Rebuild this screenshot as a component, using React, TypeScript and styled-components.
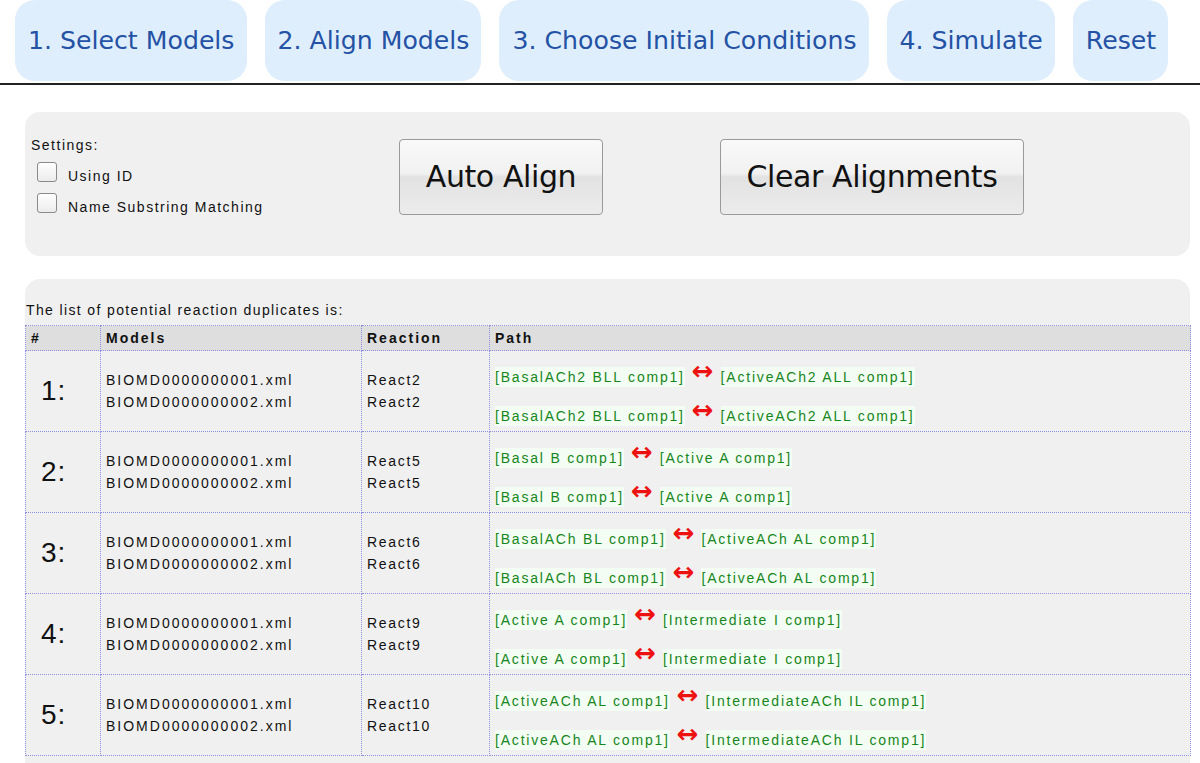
import React from "react";
import styled, { createGlobalStyle } from "styled-components";

const GlobalStyle = createGlobalStyle`
  html, body {
    margin: 0;
    padding: 0;
    background: #ffffff;
    font-family: "Liberation Sans", Arial, sans-serif;
    color: #111;
  }
`;

type PathPair = { from: string; to: string };
type Duplicate = { id: number; reaction: string; path: PathPair };

const duplicates: Duplicate[] = [
  { id: 1, reaction: "React2", path: { from: "[BasalACh2 BLL comp1]", to: "[ActiveACh2 ALL comp1]" } },
  { id: 2, reaction: "React5", path: { from: "[Basal B comp1]", to: "[Active A comp1]" } },
  { id: 3, reaction: "React6", path: { from: "[BasalACh BL comp1]", to: "[ActiveACh AL comp1]" } },
  { id: 4, reaction: "React9", path: { from: "[Active A comp1]", to: "[Intermediate I comp1]" } },
  { id: 5, reaction: "React10", path: { from: "[ActiveACh AL comp1]", to: "[IntermediateACh IL comp1]" } },
];

const steps = ["1. Select Models", "2. Align Models", "3. Choose Initial Conditions", "4. Simulate", "Reset"];

export default function App() {
  return (
    <Page>
      <GlobalStyle />
      <Nav>
        {steps.map((s) => (
          <NavButton key={s}>{s}</NavButton>
        ))}
      </Nav>
      <Rule />
      <SettingsPanel>
        <SettingsBox>
          <SettingsTitle>Settings:</SettingsTitle>
          <CheckRow>
            <CheckBox type="checkbox" />
            <CheckLabel>Using ID</CheckLabel>
          </CheckRow>
          <CheckRow>
            <CheckBox type="checkbox" />
            <CheckLabel>Name Substring Matching</CheckLabel>
          </CheckRow>
        </SettingsBox>
        <ButtonRow>
          <BigButton $width={204}>Auto Align</BigButton>
          <BigButton $width={304}>Clear Alignments</BigButton>
        </ButtonRow>
      </SettingsPanel>
      <ListPanel>
        <Caption>The list of potential reaction duplicates is:</Caption>
        <Table>
          <colgroup>
            <col style={{ width: 75 }} />
            <col style={{ width: 261 }} />
            <col style={{ width: 128 }} />
            <col />
          </colgroup>
          <thead>
            <tr>
              <Th>#</Th>
              <Th>Models</Th>
              <Th>Reaction</Th>
              <Th>Path</Th>
            </tr>
          </thead>
          <tbody>
            {duplicates.map((d) => (
              <tr key={d.id}>
                <NumCell>{d.id}:</NumCell>
                <Td $spacing={2}>
                  <div>BIOMD0000000001.xml</div>
                  <div>BIOMD0000000002.xml</div>
                </Td>
                <Td $spacing={1.7}>
                  <div>{d.reaction}</div>
                  <div>{d.reaction}</div>
                </Td>
                <PathCell>
                  {[0, 1].map((i) => (
                    <PathLine key={i}>
                      <Species>{d.path.from}</Species>
                      <Arrow>↔</Arrow>
                      <Species>{d.path.to}</Species>
                    </PathLine>
                  ))}
                </PathCell>
              </tr>
            ))}
          </tbody>
        </Table>
      </ListPanel>
    </Page>
  );
}

const Page = styled.div`
  width: 1200px;
  height: 763px;
  overflow: hidden;
`;

const Nav = styled.div`
  display: flex;
  gap: 18px;
  padding-left: 15px;
  height: 81px;
`;

const NavButton = styled.div`
  display: flex;
  align-items: center;
  padding: 0 12px 0 13px;
  height: 81px;
  background: #dfeefc;
  border-radius: 20px;
  color: #2452a4;
  font-family: "DejaVu Sans", sans-serif;
  font-size: 25.2px;
  white-space: nowrap;
`;

const Rule = styled.div`
  height: 2px;
  background: #222;
  margin-top: 2px;
`;

const SettingsPanel = styled.div`
  display: flex;
  align-items: flex-start;
  margin: 27px 10px 0 25px;
  height: 144px;
  box-sizing: border-box;
  padding: 27px 0 0 6px;
  background: #f0f0f0;
  border-radius: 15px;
`;

const SettingsBox = styled.div`
  display: flex;
  flex-direction: column;
  width: 368px;
  font-size: 14px;
  letter-spacing: 1.5px;
  margin-top: -2px;
`;

const SettingsTitle = styled.div`
  line-height: 16px;
  margin-bottom: 3px;
`;

const CheckRow = styled.label`
  display: flex;
  align-items: center;
  gap: 11px;
  height: 31px;
  padding-left: 6px;
`;

const CheckLabel = styled.span`
  padding-top: 8px;
`;

const CheckBox = styled.input`
  appearance: none;
  margin: 0;
  width: 20px;
  height: 20px;
  border: 1px solid #8a8a8a;
  border-radius: 3px;
  box-sizing: border-box;
  background: linear-gradient(#fefefe, #ececec);
`;

const ButtonRow = styled.div`
  display: flex;
  gap: 117px;
`;

const BigButton = styled.button<{ $width: number }>`
  width: ${(p) => p.$width}px;
  height: 76px;
  border: 1px solid #9a9a9a;
  border-radius: 4px;
  background: linear-gradient(#f9f9f9 0%, #f1f1f1 45%, #e2e2e2 50%, #ececec 100%);
  font-family: "DejaVu Sans", sans-serif;
  font-size: 30px;
  letter-spacing: -0.4px;
  color: #111;
  padding: 0 0 2px;
`;

const ListPanel = styled.div`
  margin: 23px 10px 0 25px;
  padding-top: 23px;
  background: #f0f0f0;
  border-radius: 15px 15px 0 0;
  height: 480px;
`;

const Caption = styled.div`
  font-size: 14px;
  letter-spacing: 1.37px;
  line-height: 16px;
  padding-left: 1px;
  margin-bottom: 7px;
`;

const Table = styled.table`
  width: 1166px;
  border-collapse: collapse;
  table-layout: fixed;
  font-size: 14px;
`;

const Th = styled.th`
  border: 1px dotted #8f8fe0;
  background: #dedede;
  height: 24px;
  padding: 0 5px;
  text-align: left;
  font-weight: bold;
  letter-spacing: 2px;
  font-size: 14px;
`;

const Td = styled.td<{ $spacing?: number }>`
  border: 1px dotted #8f8fe0;
  height: 81px;
  box-sizing: border-box;
  padding: 0 5px;
  vertical-align: middle;
  line-height: 22px;
  letter-spacing: ${(p) => p.$spacing ?? 1.2}px;
`;

const NumCell = styled(Td)`
  font-size: 28px;
  padding-left: 15px;
  letter-spacing: 1px;
`;

const PathCell = styled(Td)`
  padding: 16px 5px 0;
  vertical-align: top;
`;

const PathLine = styled.div`
  display: flex;
  align-items: center;
  gap: 7px;
  height: 20px;
  letter-spacing: 1.8px;

  & + & {
    margin-top: 19px;
  }
`;

const Species = styled.span`
  color: #16861c;
  background: #f4fdf3;
  line-height: 20px;
`;

const Arrow = styled.span`
  color: #ee1111;
  font-family: "DejaVu Sans", sans-serif;
  font-weight: bold;
  font-size: 26px;
  line-height: 20px;
  letter-spacing: 0;
  margin-top: -12px;
`;
